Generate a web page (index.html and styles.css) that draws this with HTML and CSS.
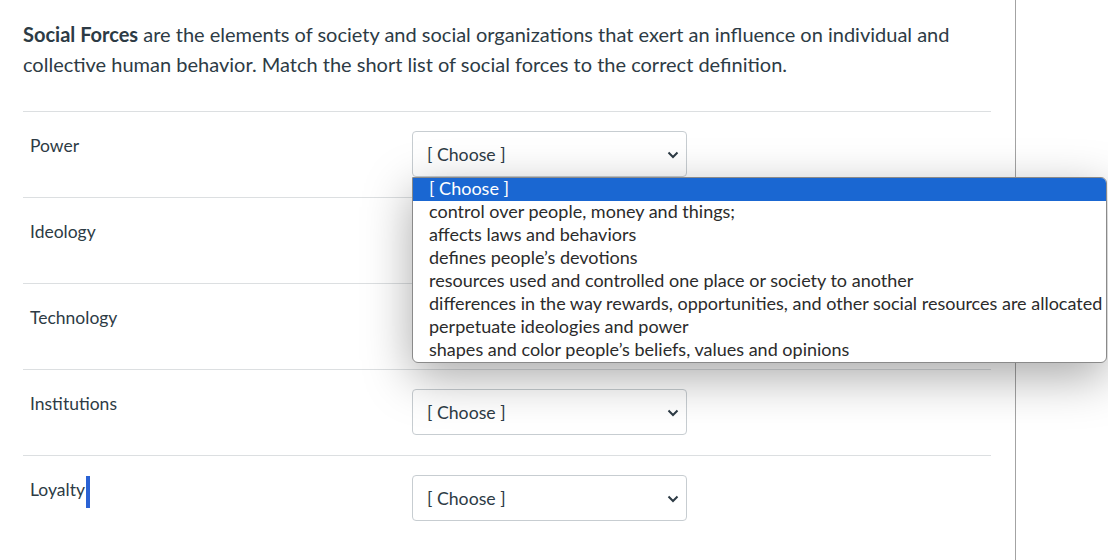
FILE: index.html
```html
<!DOCTYPE html>
<html>
<head>
<meta charset="utf-8">
<link rel="stylesheet" href="styles.css">
</head>
<body>
<div class="page">
  <div class="content">
    <p class="intro"><strong>Social Forces</strong> are the elements of society and social organizations that exert an influence on individual and collective human behavior. Match the short list of social forces to the correct definition.</p>
    <div class="rows">
      <div class="row">
        <div class="label">Power</div>
        <div class="select"><span>[ Choose ]</span><svg class="chev" width="12" height="8" viewBox="0 0 12 8"><path d="M1.5 1.5 L6 6 L10.5 1.5" fill="none" stroke="#2d3b45" stroke-width="2"/></svg></div>
      </div>
      <div class="row">
        <div class="label">Ideology</div>
        <div class="select"><span>[ Choose ]</span><svg class="chev" width="12" height="8" viewBox="0 0 12 8"><path d="M1.5 1.5 L6 6 L10.5 1.5" fill="none" stroke="#2d3b45" stroke-width="2"/></svg></div>
      </div>
      <div class="row">
        <div class="label">Technology</div>
        <div class="select"><span>[ Choose ]</span><svg class="chev" width="12" height="8" viewBox="0 0 12 8"><path d="M1.5 1.5 L6 6 L10.5 1.5" fill="none" stroke="#2d3b45" stroke-width="2"/></svg></div>
      </div>
      <div class="row">
        <div class="label">Institutions</div>
        <div class="select"><span>[ Choose ]</span><svg class="chev" width="12" height="8" viewBox="0 0 12 8"><path d="M1.5 1.5 L6 6 L10.5 1.5" fill="none" stroke="#2d3b45" stroke-width="2"/></svg></div>
      </div>
      <div class="row">
        <div class="label">Loyalty<span class="caret"></span></div>
        <div class="select"><span>[ Choose ]</span><svg class="chev" width="12" height="8" viewBox="0 0 12 8"><path d="M1.5 1.5 L6 6 L10.5 1.5" fill="none" stroke="#2d3b45" stroke-width="2"/></svg></div>
      </div>
    </div>
  </div>
</div>
<ul class="listbox">
  <li class="opt selected">[ Choose ]</li>
  <li class="opt">control over people, money and things;</li>
  <li class="opt">affects laws and behaviors</li>
  <li class="opt">defines people’s devotions</li>
  <li class="opt">resources used and controlled one place or society to another</li>
  <li class="opt">differences in the way rewards, opportunities, and other social resources are allocated</li>
  <li class="opt">perpetuate ideologies and power</li>
  <li class="opt">shapes and color people’s beliefs, values and opinions</li>
</ul>
</body>
</html>
```

FILE: styles.css
```css
html, body {
  margin: 0;
  padding: 0;
  background: #fff;
  height: 100%;
  overflow: hidden;
}
body {
  font-family: Lato, "Open Sans", sans-serif;
  color: #2d3b45;
}
.page {
  width: 1016px;
  height: 560px;
  border-right: 1px solid #a3a3a3;
  box-sizing: border-box;
}
.content {
  padding: 19px 0 0 23px;
  width: 968px;
}
.intro {
  margin: 0 0 32px 0;
  font-size: 20px;
  line-height: 30px;
}
.intro strong {
  font-weight: 700;
}
.row {
  display: flex;
  border-top: 1px solid #dcdfe1;
  padding: 19px 0 20px 7px;
}
.label {
  width: 382px;
  font-size: 17.5px;
  line-height: 28px;
  padding-top: 1px;
  display: flex;
  align-items: flex-start;
}
.caret {
  display: inline-block;
  width: 4px;
  height: 32px;
  background: #2a62d4;
  margin-left: 1px;
}
.select {
  width: 275px;
  height: 46px;
  box-sizing: border-box;
  border: 1px solid #c7cdd1;
  border-radius: 4px;
  background: #fff;
  display: flex;
  align-items: center;
  justify-content: space-between;
  padding: 0 7px 0 14px;
  font-size: 17.7px;
}
.chev {
  display: block;
  margin-top: 2px;
}
.listbox {
  position: absolute;
  left: 412px;
  top: 177px;
  width: 695px;
  margin: 0;
  padding: 0;
  list-style: none;
  background: #fff;
  border: 1px solid #8a8a8a;
  border-radius: 0 6px 6px 6px;
  box-sizing: border-box;
  box-shadow: 0 14px 48px rgba(0, 0, 0, 0.34);
  overflow: hidden;
  font-size: 18px;
  color: #2b2b2b;
}
.opt {
  height: 23px;
  line-height: 21px;
  padding-left: 16px;
  white-space: nowrap;
}
.opt.selected {
  background: #1a67d2;
  color: #fff;
}
```
